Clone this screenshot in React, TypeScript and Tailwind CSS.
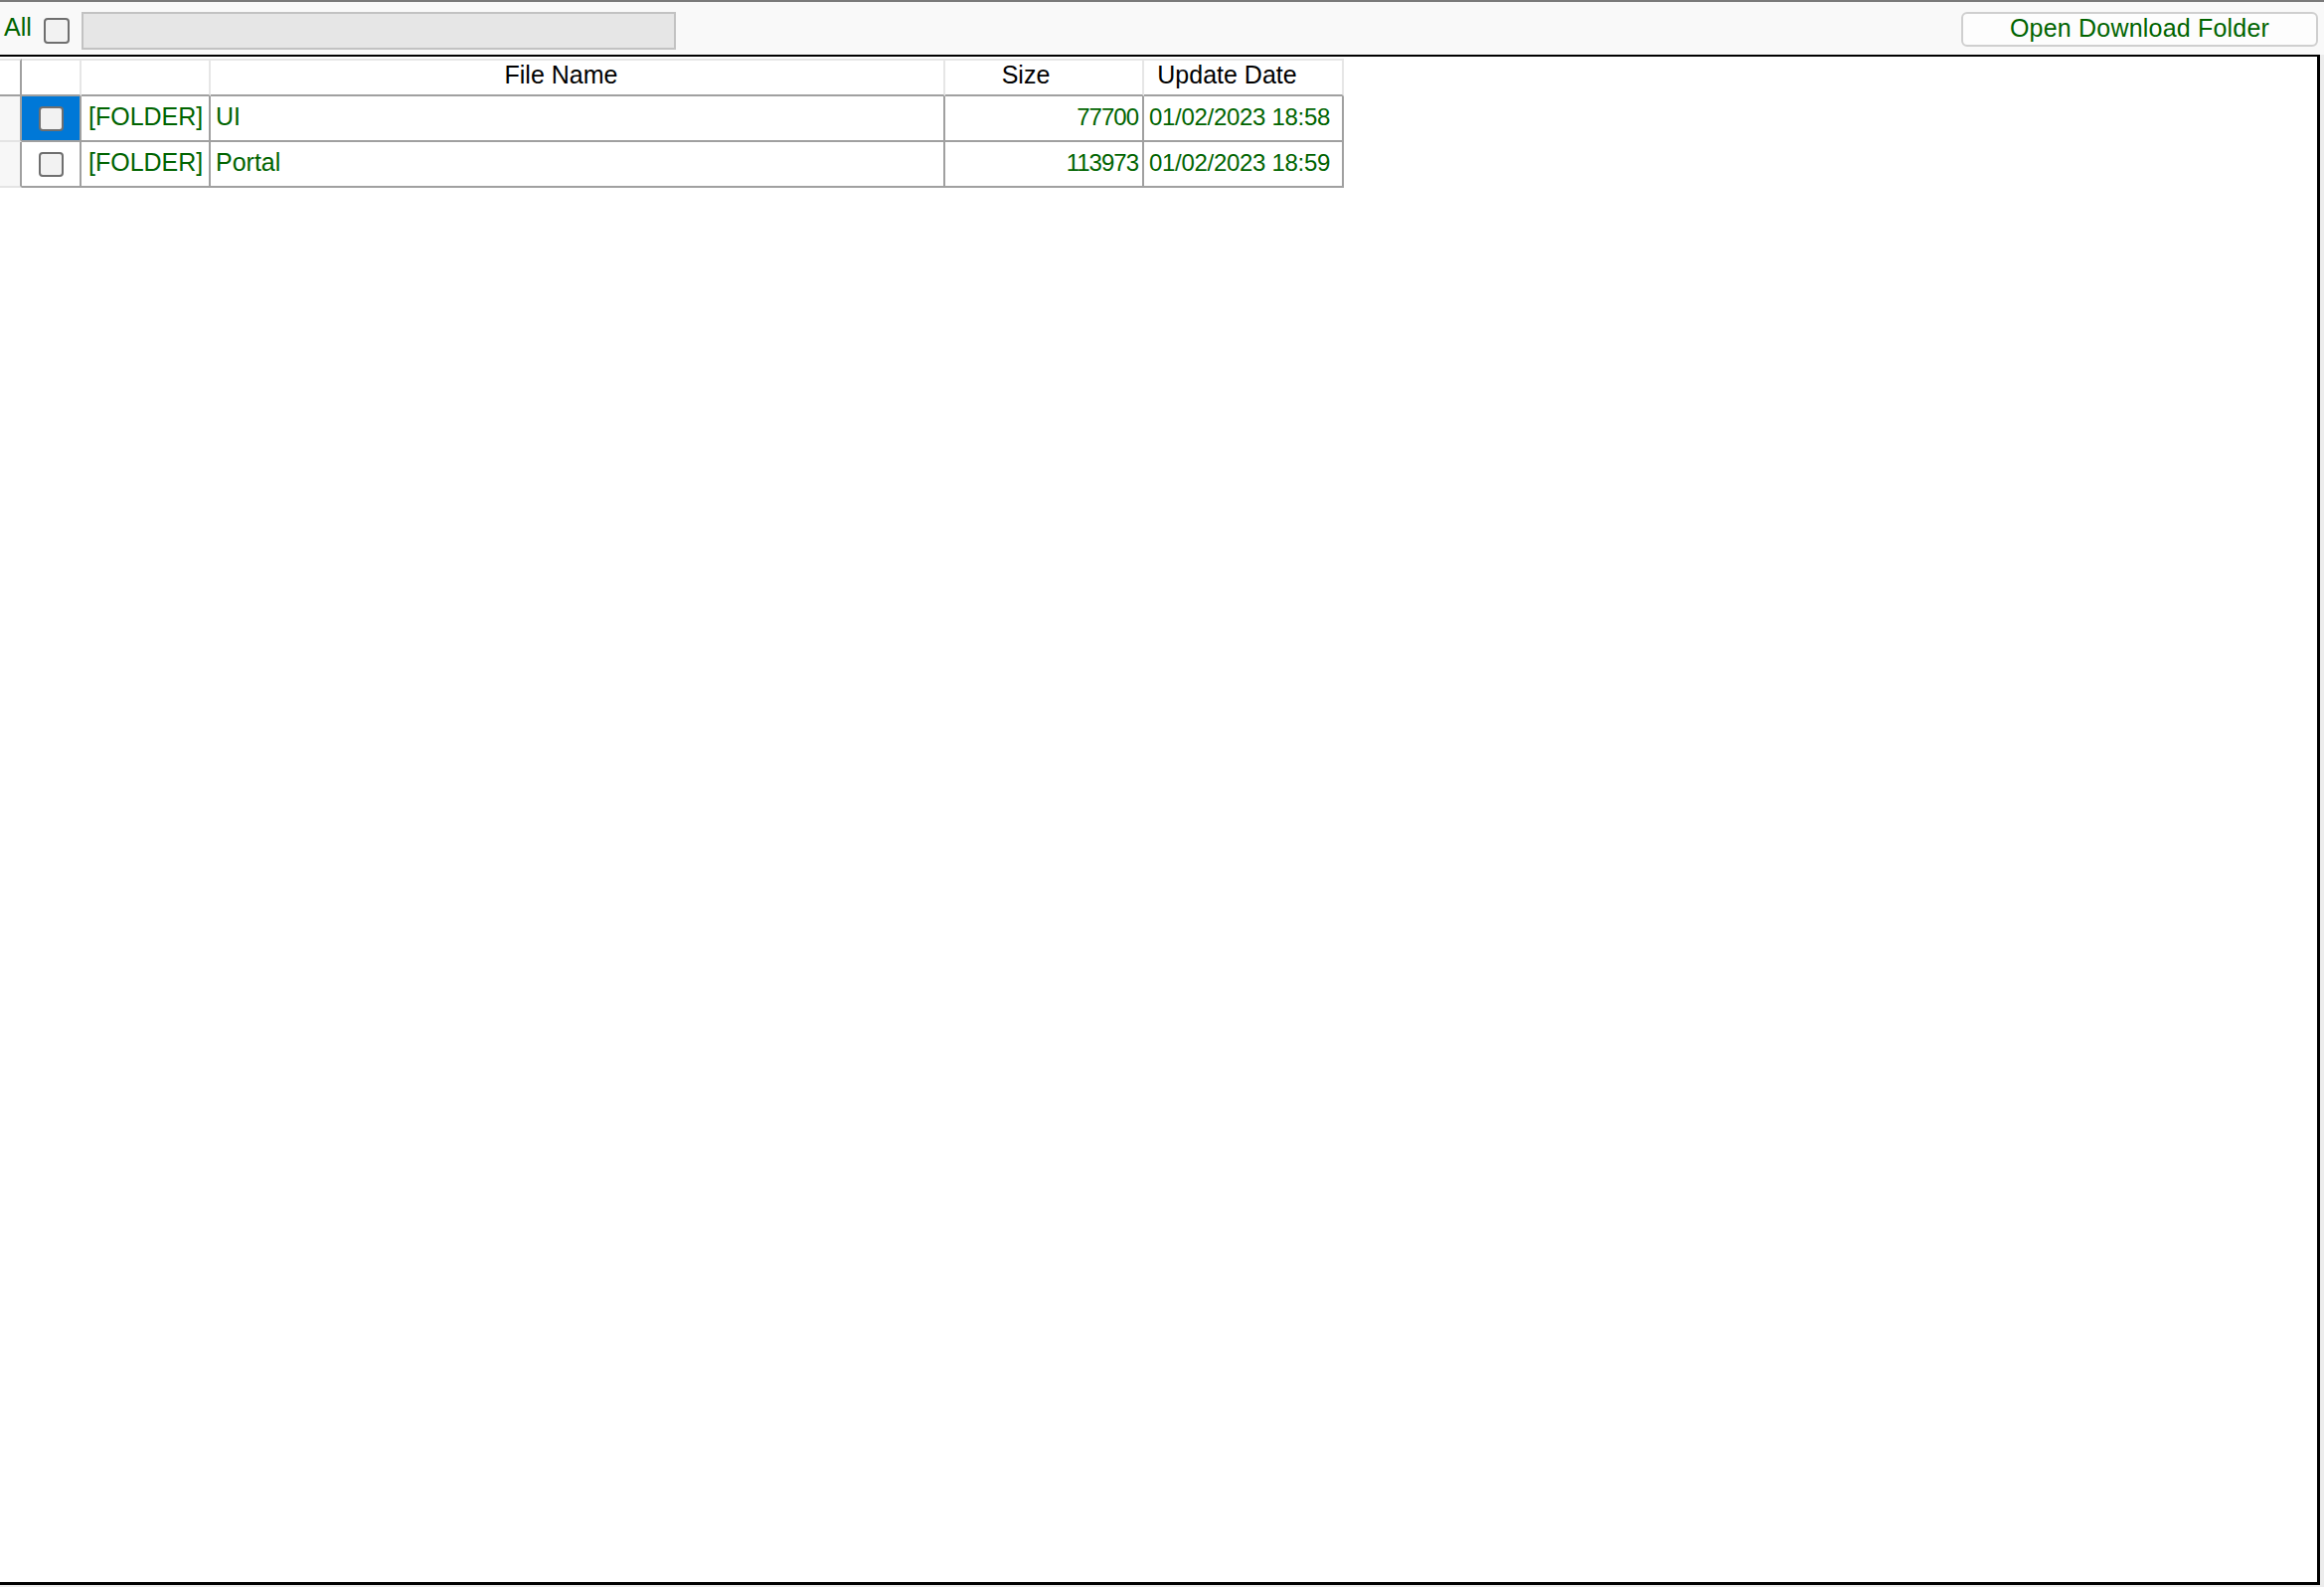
import React from 'react';

type Row = { kind: string; name: string; size: string; date: string; selected?: boolean };

const rows: Row[] = [
  { kind: '[FOLDER]', name: 'UI', size: '77700', date: '01/02/2023 18:58', selected: true },
  { kind: '[FOLDER]', name: 'Portal', size: '113973', date: '01/02/2023 18:59' },
];

/** Windows 스타일 체크박스 */
function Check() {
  return <div className="w-[25px] h-[25px] rounded-[4px] border-2 border-[#6f6f6f] bg-[#f2f2f2]" />;
}

export default function App() {
  return (
    <div className="w-[2338px] h-[1597px] flex flex-col bg-[#f9f9f9] overflow-hidden font-['Liberation_Sans',Arial,sans-serif] text-[25px] leading-none">
      {/* 상단 회색 라인 */}
      <div className="h-[2px] bg-[#7a7a7a]" />

      {/* 툴바 */}
      <div className="h-[53px] flex items-center pt-[4px] pr-[6px]">
        <span className="w-[44px] pl-[4px] text-[#006400] -mt-[6px]">All</span>
        <div className="w-[26px] h-[26px] rounded-[4px] border-2 border-[#6f6f6f] bg-[#f2f2f2]" />
        <div className="ml-[12px] w-[598px] h-[38px] border-2 border-[#c2c2c2] bg-[#e6e6e6]" />
        <div className="flex-1" />
        <button className="w-[359px] h-[35px] -mt-[3px] pb-[2px] rounded-[6px] border-2 border-[#cfcfcf] bg-[#fdfdfd] text-[#006400] flex items-center justify-center tracking-[0.2px]">
          Open Download Folder
        </button>
      </div>

      {/* 목록 패널 */}
      <div className="flex-1 flex flex-col pr-[4px] pb-[2px] bg-[#ececec]">
        <div className="flex-1 bg-white border-t-2 border-r-[3px] border-b-[3px] border-black pt-[2px]">
          {/* 헤더 */}
          <div className="flex h-[38px] text-black">
            <div className="w-[22px] border-t-2 border-[#e6e6e6] border-r-2 border-r-[#a0a0a0] border-b-2 border-b-[#a0a0a0]" />
            <div className="w-[60px] border-t-2 border-[#e6e6e6] border-r-2 border-b-2 border-b-[#a0a0a0]" />
            <div className="w-[130px] border-t-2 border-[#e6e6e6] border-r-2 border-b-2 border-b-[#a0a0a0]" />
            <div className="w-[739px] border-t-2 border-[#e6e6e6] border-r-2 border-b-2 border-b-[#a0a0a0] flex items-center justify-center pr-[32px] pb-[5px]">
              File Name
            </div>
            <div className="w-[200px] border-t-2 border-[#e6e6e6] border-r-2 border-b-2 border-b-[#a0a0a0] flex items-center justify-center pr-[36px] pb-[5px]">
              Size
            </div>
            <div className="w-[201px] border-t-2 border-[#e6e6e6] border-r-2 border-b-2 border-b-[#a0a0a0] flex items-center justify-center pr-[32px] pb-[5px]">
              Update Date
            </div>
          </div>

          {/* 행 */}
          {rows.map((r) => (
            <div key={r.name} className="flex h-[46px] text-[#006400]">
              <div className="w-[22px] bg-[#f7f7f7] border-r-2 border-r-[#a0a0a0] border-b-2 border-b-[#e4e4e4]" />
              <div
                className={`w-[60px] border-r-2 border-b-2 border-[#a0a0a0] flex items-center justify-center ${
                  r.selected ? 'bg-[#0078d7]' : 'bg-white'
                }`}
              >
                <Check />
              </div>
              <div className="w-[130px] border-r-2 border-b-2 border-[#a0a0a0] flex items-center pl-[7px] pb-[3px]">
                {r.kind}
              </div>
              <div className="w-[739px] border-r-2 border-b-2 border-[#a0a0a0] flex items-center pl-[5px] pb-[3px]">
                {r.name}
              </div>
              <div className="w-[200px] border-r-2 border-b-2 border-[#a0a0a0] flex items-center justify-end pr-[4px] pb-[3px] text-[24px] tracking-[-1px]">
                {r.size}
              </div>
              <div className="w-[201px] border-r-2 border-b-2 border-[#a0a0a0] flex items-center pl-[5px] pb-[3px] text-[24px] tracking-[-0.3px]">
                {r.date}
              </div>
            </div>
          ))}
        </div>
      </div>
    </div>
  );
}
